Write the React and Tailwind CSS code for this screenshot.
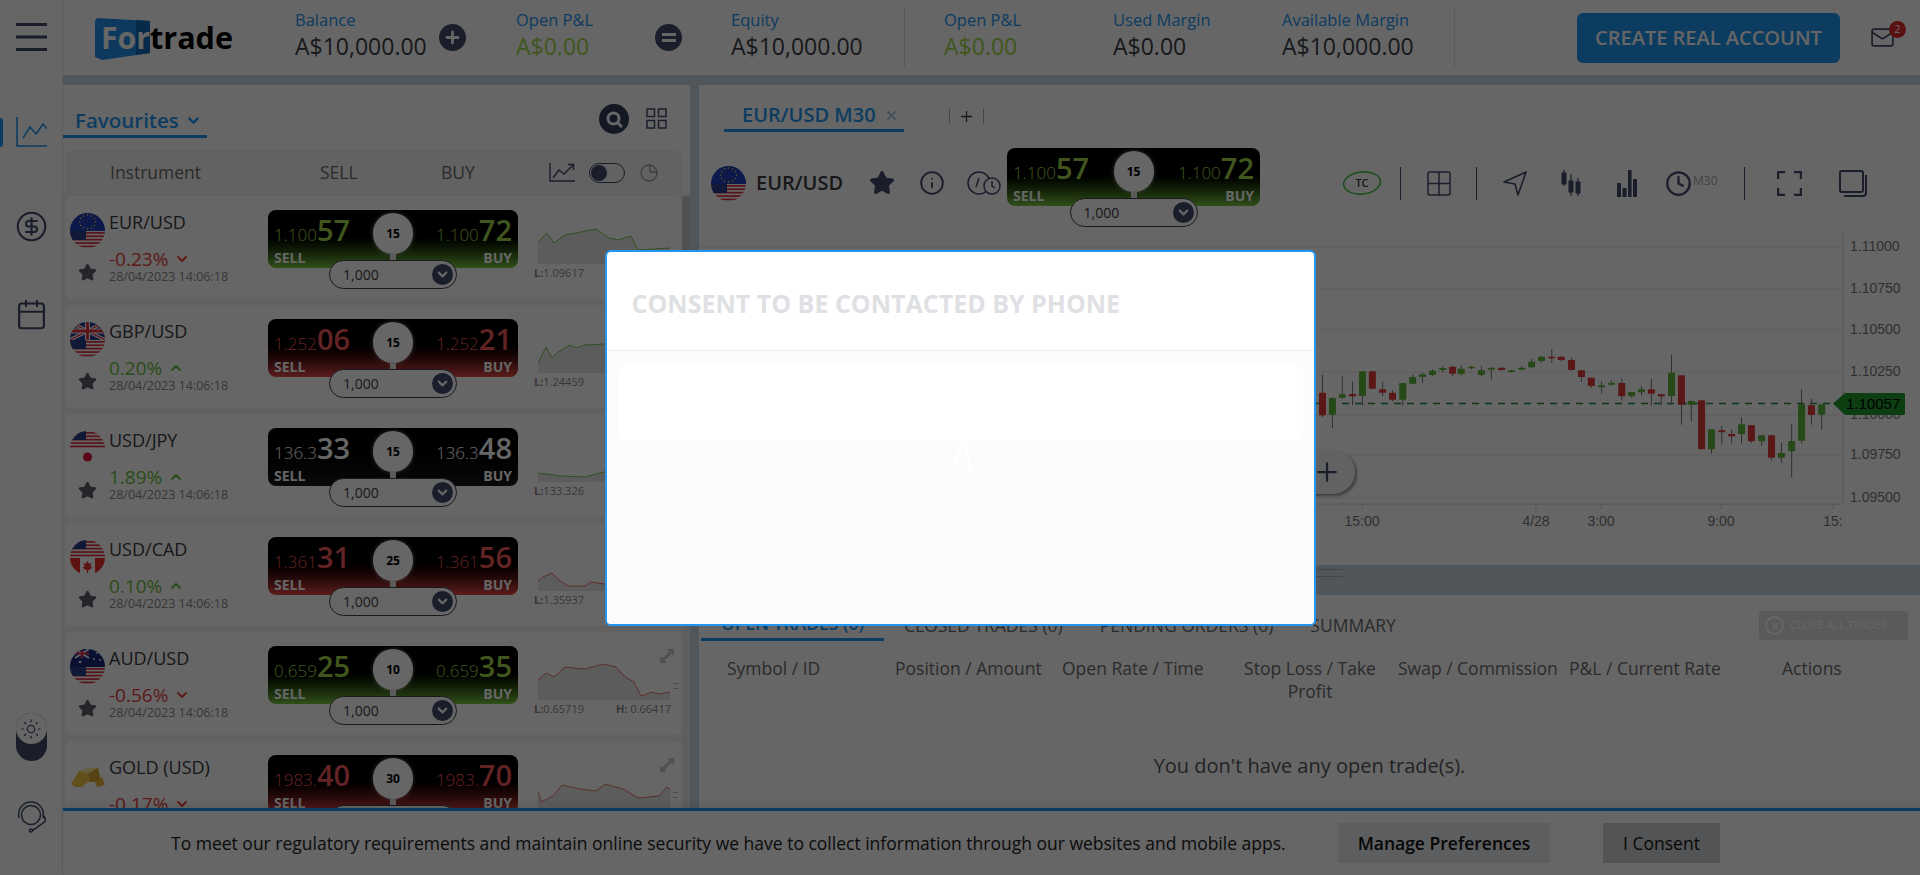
import React from 'react';
import { ChevronDown, ChevronUp, CircleDollarSign, Calendar, Info, Star, Clock, X, Plus, Sun, Mail } from 'lucide-react';

const STATS_DARK = 'text-[#3d4048]';

const ROWS = [
  { name: 'EUR/USD', top: 'eu', bottom: 'us', pct: '-0.23%', up: false, tone: 'green', sell: ['1.100', '57'], buy: ['1.100', '72'], spread: 15, low: '1.09617', spark: 'M0 14 L9 5 L16 15 L27 7 L38 5 L58 1 L71 10 L80 12 L93 8 L100 22 L132 20', stroke: 'green' },
  { name: 'GBP/USD', top: 'gb', bottom: 'us', pct: '0.20%', up: true, tone: 'red', sell: ['1.252', '06'], buy: ['1.252', '21'], spread: 15, low: '1.24459', spark: 'M0 26 L8 10 L14 21 L20 15 L32 8 L38 11 L47 8 L66 7 L132 8', stroke: 'green' },
  { name: 'USD/JPY', top: 'us', bottom: 'jp', pct: '1.89%', up: true, tone: 'none', sell: ['136.3', '33'], buy: ['136.3', '48'], spread: 15, low: '133.326', spark: 'M0 27 L23 30 L47 31 L66 26 L132 24', stroke: 'green' },
  { name: 'USD/CAD', top: 'us', bottom: 'ca', pct: '0.10%', up: true, tone: 'red', sell: ['1.361', '31'], buy: ['1.361', '56'], spread: 25, low: '1.35937', spark: 'M0 26 L5 22 L14 18 L22 26 L30 31 L47 31 L53 27 L66 29 L132 30', stroke: 'red' },
  { name: 'AUD/USD', top: 'au', bottom: 'us', pct: '-0.56%', up: false, tone: 'green', sell: ['0.659', '25'], buy: ['0.659', '35'], spread: 10, low: '0.65719', high: '0.66417', expand: true, spark: 'M0 16 L8 9 L16 13 L27 3 L36 4 L47 5 L65 0 L78 3 L87 13 L96 18 L103 32 L114 28 L121 30 L132 28', stroke: 'red' },
  { name: 'GOLD (USD)', gold: true, pct: '-0.17%', up: false, tone: 'red', sell: ['1983.', '40'], buy: ['1983.', '70'], spread: 30, expand: true, spark: 'M0 19 L3 29 L15 23 L24 12 L42 16 L58 18 L67 11 L85 16 L100 25 L121 23 L129 14 L132 16', stroke: 'red' },
];

const CANDLES = [
  [57, 398, 525, 452, 520, 'r'], [82, 465, 558, 468, 518, 'g'], [107, 402, 470, 457, 467, 'g'], [133, 418, 490, 456, 463, 'r'],
  [158, 388, 490, 388, 462, 'g'], [183, 388, 440, 388, 440, 'r'], [209, 420, 462, 442, 452, 'r'], [234, 445, 478, 452, 473, 'r'],
  [260, 423, 490, 423, 473, 'g'], [285, 397, 427, 405, 425, 'g'], [310, 392, 423, 397, 405, 'g'], [335, 382, 402, 386, 399, 'g'],
  [361, 373, 392, 378, 384, 'g'], [386, 372, 403, 374, 395, 'r'], [408, 370, 400, 380, 396, 'g'], [434, 372, 382, 374, 379, 'g'],
  [459, 372, 403, 385, 399, 'g'], [484, 376, 412, 377, 383, 'g'], [510, 376, 386, 377, 384, 'r'], [535, 383, 392, 385, 390, 'g'],
  [561, 372, 385, 377, 383, 'g'], [586, 350, 378, 359, 376, 'g'], [611, 342, 362, 344, 357, 'g'], [637, 322, 362, 344, 349, 'r'],
  [661, 342, 358, 344, 354, 'r'], [687, 347, 388, 354, 384, 'r'], [712, 385, 420, 385, 405, 'r'], [737, 407, 438, 407, 432, 'r'],
  [763, 418, 455, 430, 436, 'g'], [788, 415, 431, 422, 428, 'g'], [814, 410, 475, 423, 463, 'r'], [839, 450, 468, 450, 463, 'g'],
  [864, 432, 460, 442, 451, 'g'], [889, 410, 490, 442, 455, 'r'], [914, 455, 490, 457, 463, 'r'], [940, 338, 488, 392, 462, 'g'],
  [965, 400, 548, 400, 488, 'r'], [990, 475, 538, 477, 488, 'g'], [1016, 475, 622, 475, 622, 'r'], [1041, 562, 635, 562, 622, 'g'],
  [1067, 552, 608, 565, 571, 'r'], [1092, 562, 604, 576, 583, 'r'], [1117, 525, 604, 547, 576, 'g'], [1142, 550, 603, 550, 598, 'r'],
  [1168, 580, 612, 580, 598, 'g'], [1193, 580, 656, 580, 647, 'r'], [1218, 602, 662, 633, 647, 'g'], [1244, 545, 706, 597, 628, 'g'],
  [1269, 443, 604, 487, 596, 'g'], [1294, 470, 548, 490, 519, 'r'], [1320, 487, 563, 487, 518, 'g'],
];

const PRICE_LEVELS = [['1.11000', 13], ['1.10750', 55], ['1.10500', 96], ['1.10250', 138], ['1.10000', 181], ['1.09750', 221], ['1.09500', 264]];
const TIME_TICKS = [['15:00', 663], ['4/28', 837], ['3:00', 902], ['9:00', 1022], ['15:', 1134]];

function FlagHalf({ code, y, h }) {
  if (code === 'eu') {
    return (
      <g>
        <rect x="0" y={y} width="35" height={h} fill="#1e3fb8" />
        {[0, 1, 2, 3, 4, 5, 6, 7, 8, 9, 10, 11].map((i) => (
          <circle key={i} cx={17.5 + 8 * Math.cos((i * Math.PI) / 6)} cy={y + 9 + 7 * Math.sin((i * Math.PI) / 6)} r="0.8" fill="#f8d838" />
        ))}
      </g>
    );
  }
  if (code === 'us') {
    return (
      <g>
        <rect x="0" y={y} width="35" height={h} fill="#fff" />
        {[0, 1, 2, 3, 4].map((i) => (
          <rect key={i} x="0" y={y + 1 + i * 3.4} width="35" height="1.7" fill="#d8303c" />
        ))}
        <rect x="0" y={y} width="16" height="9" fill="#2b3f8c" />
      </g>
    );
  }
  if (code === 'gb') {
    return (
      <g>
        <rect x="0" y={y} width="35" height={h} fill="#27409a" />
        <path d={`M0 ${y} L35 ${y + h} M35 ${y} L0 ${y + h}`} stroke="#fff" strokeWidth="3.5" />
        <path d={`M0 ${y} L35 ${y + h} M35 ${y} L0 ${y + h}`} stroke="#e0303c" strokeWidth="1.3" />
        <path d={`M17.5 ${y} V${y + h} M0 ${y + h / 2} H35`} stroke="#fff" strokeWidth="5" />
        <path d={`M17.5 ${y} V${y + h} M0 ${y + h / 2} H35`} stroke="#e0303c" strokeWidth="2.8" />
      </g>
    );
  }
  if (code === 'jp') {
    return (
      <g>
        <rect x="0" y={y} width="35" height={h} fill="#fff" />
        <circle cx="17.5" cy={y + 8} r="4.5" fill="#e0103c" />
      </g>
    );
  }
  if (code === 'ca') {
    return (
      <g>
        <rect x="0" y={y} width="35" height={h} fill="#fff" />
        <rect x="0" y={y} width="10" height={h} fill="#ee3028" />
        <rect x="25" y={y} width="10" height={h} fill="#ee3028" />
        <path d={`M17.5 ${y + 3} l2 3 2-1 -1 4 2 0 -3 3 h-1.4 v3 h-1.2 v-3 h-1.4 l-3-3 2 0 -1-4 2 1z`} fill="#ee3028" />
      </g>
    );
  }
  return (
    <g>
      <rect x="0" y={y} width="35" height={h} fill="#1a2a78" />
      <rect x="5" y={y} width="14" height="9" fill="#27409a" />
      <path d={`M5 ${y} L19 ${y + 9} M19 ${y} L5 ${y + 9}`} stroke="#fff" strokeWidth="1.5" />
      <path d={`M12 ${y} V${y + 9} M5 ${y + 4.5} H19`} stroke="#e0303c" strokeWidth="2" />
      <circle cx="10" cy={y + 13} r="1.3" fill="#fff" />
      <circle cx="27" cy={y + 4} r="0.9" fill="#fff" />
      <circle cx="24" cy={y + 10} r="0.9" fill="#fff" />
      <circle cx="30" cy={y + 11} r="0.9" fill="#fff" />
    </g>
  );
}

function PairFlag({ top, bottom }) {
  const clip = 'clip' + top + bottom;
  return (
    <svg width="35" height="35" viewBox="0 0 35 35" className="block shrink-0">
      <defs>
        <clipPath id={clip}>
          <circle cx="17.5" cy="17.5" r="17.5" />
        </clipPath>
      </defs>
      <g clipPath={`url(#${clip})`}>
        <FlagHalf code={top} y={0} h={18} />
        <FlagHalf code={bottom} y={18} h={17} />
      </g>
    </svg>
  );
}

function GoldBars() {
  return (
    <svg width="35" height="35" viewBox="0 0 35 35" className="block shrink-0">
      <path d="M1 26 L9 13 L20 10 L28 10 L31 24 L18 24 L12 29 L5 29z" fill="#f2c84a" />
      <path d="M9 13 L20 10 L28 10 L18 16z" fill="#ffe99a" />
      <path d="M18 16 L28 10 L31 24 L20 24z" fill="#dca838" />
      <path d="M25 24 L32 19 L35 27 L27 29z" fill="#e8b63a" />
    </svg>
  );
}

function PriceBox({ sell, buy, spread, tone, wide }) {
  const bg = tone === 'green'
    ? 'from-black from-40% to-[#78c840]'
    : tone === 'red'
      ? 'from-black from-40% to-[#e84848]'
      : 'from-black to-[#1a1a20]';
  const price = tone === 'green' ? 'text-[#a0d84a]' : tone === 'red' ? 'text-[#f25858]' : 'text-white';
  return (
    <div className={wide ? 'flex w-[253px] flex-col items-center' : 'flex w-[250px] flex-col items-center'}>
      <div className={`relative flex h-[58px] w-full justify-between rounded-lg bg-linear-to-b px-[6px] pt-[4px] ${bg}`}>
        <div className="flex flex-col">
          <div className={`flex items-baseline leading-[32px] ${price}`}>
            <span className="text-[17px] font-light">{sell[0]}</span>
            <span className="text-[29px] font-semibold">{sell[1]}</span>
          </div>
          <span className="-mt-[2px] text-[14px] leading-[18px] font-bold text-white">SELL</span>
        </div>
        <div className="flex flex-col items-end">
          <div className={`flex items-baseline leading-[32px] ${price}`}>
            <span className="text-[17px] font-light">{buy[0]}</span>
            <span className="text-[29px] font-semibold">{buy[1]}</span>
          </div>
          <span className="-mt-[2px] text-[14px] leading-[18px] font-bold text-white">BUY</span>
        </div>
        <div className="absolute top-[3px] left-1/2 flex h-[41px] w-[40px] -translate-x-1/2 items-center justify-center rounded-full bg-white text-[12px] font-bold text-black shadow-[0_0_4px_rgba(255,255,255,0.5)]">{spread}</div>
        <div className="absolute top-[43px] left-1/2 h-[8px] w-[6px] -translate-x-1/2 bg-[#e4e4e4]" />
      </div>
      <div className="relative -mt-[8px] flex h-[29px] w-[128px] items-center justify-between rounded-full border border-[#3d4048] bg-white pr-[3px] pl-[13px] text-[14px] text-[#3d4048]">
        <span>1,000</span>
        <div className="flex h-[21px] w-[21px] items-center justify-center rounded-full bg-[#414b6b]">
          <ChevronDown size={15} strokeWidth={3.5} className="text-white" />
        </div>
      </div>
    </div>
  );
}

function Spark({ path, stroke }) {
  const color = stroke === 'green' ? '#7cc64a' : '#e8726c';
  return (
    <svg width="132" height="36" viewBox="0 0 132 36" className="block">
      <path d={`${path} V36 H0 Z`} fill="#e6e6e6" />
      <path d={path} fill="none" stroke={color} strokeWidth="1" />
    </svg>
  );
}

function ExpandIcon() {
  return (
    <svg width="14" height="14" viewBox="0 0 14 14" className="absolute top-[17px] right-[8px]" fill="#c8c8c8">
      <path d="M7 0h7v7l-2.4-2.4L4.6 11.6 7 14H0V7l2.4 2.4 7-7z" />
    </svg>
  );
}

function InstrumentRow({ row }) {
  const pctColor = row.up ? 'text-[#6ebf3a]' : 'text-[#e8403c]';
  return (
    <div className="relative mb-[6px] flex h-[103px] shrink-0 rounded-md bg-white pl-[5px]">
      <div className="flex w-[198px] shrink-0">
        <div className="flex w-[39px] shrink-0 flex-col pt-[17px]">
          {row.gold ? <GoldBars /> : <PairFlag top={row.top} bottom={row.bottom} />}
          <Star size={19} className="mt-[15px] ml-[8px] fill-[#5a5f6b] text-[#5a5f6b]" />
        </div>
        <div className="flex flex-col pt-[14px]">
          <span className="text-[18px] leading-[24px] text-[#3a3c42]">{row.name}</span>
          <div className={`mt-[15px] flex items-center gap-[6px] text-[19px] leading-[20px] ${pctColor}`}>
            {row.pct}
            {row.up ? <ChevronUp size={16} strokeWidth={3} /> : <ChevronDown size={16} strokeWidth={3} />}
          </div>
          <span className="text-[12.5px] leading-[16px] whitespace-nowrap text-[#8a8a8a]">28/04/2023 14:06:18</span>
        </div>
      </div>
      <div className="pt-[14px]">
        <PriceBox sell={row.sell} buy={row.buy} spread={row.spread} tone={row.tone} />
      </div>
      <div className="ml-[20px] flex w-[135px] flex-col pt-[32px]">
        <Spark path={row.spark} stroke={row.stroke} />
        {row.low && (
          <div className="mt-[1px] flex justify-between pr-[2px] text-[11px] text-[#8a8a8a]">
            <span className="-ml-[4px]"><b>L:</b>{row.low}</span>
            {row.high && <span><b>H:</b> {row.high}</span>}
          </div>
        )}
      </div>
      {row.expand && <ExpandIcon />}
      {row.expand && <div className="absolute top-[51px] right-[4px] h-[6px] w-[5px] border-y border-[#bbb]" />}
    </div>
  );
}

function Stat({ label, value, className, green }) {
  return (
    <div className={`flex shrink-0 flex-col pb-[8px] ${className}`}>
      <span className="text-[16.5px] leading-[24px] text-[#2196f3]">{label}</span>
      <span className={green ? 'text-[23px] leading-[28px] text-[#a0d84a]' : `text-[23px] leading-[28px] ${STATS_DARK}`}>{value}</span>
    </div>
  );
}

function Hamburger() {
  return (
    <svg width="31" height="28" viewBox="0 0 31 28" className="block">
      <path d="M0 1.5H31M0 14H31M0 26.5H31" stroke="#414b6b" strokeWidth="3" />
    </svg>
  );
}

function Sidebar() {
  return (
    <aside className="relative flex h-full w-[63px] shrink-0 flex-col items-center border-r border-[#e6e6e6] bg-white">
      <div className="mt-[23px]"><Hamburger /></div>
      <div className="absolute top-[118px] left-0 h-[29px] w-[3px] rounded-r bg-[#2196f3]" />
      <svg width="31" height="30" viewBox="0 0 31 30" className="mt-[66px] block" fill="none" stroke="#2196f3" strokeWidth="1.6">
        <path d="M1 0V29H31" />
        <path d="M7 21L14 10L20 17L27 7L31 12" />
      </svg>
      <CircleDollarSign size={33} strokeWidth={1.5} className="mt-[63px] text-[#414b6b]" />
      <Calendar size={33} strokeWidth={1.6} className="mt-[55px] text-[#414b6b]" />
      <div className="mt-auto mb-[114px] flex h-[48px] w-[31px] flex-col items-center rounded-full bg-[#414b6b]">
        <div className="flex h-[31px] w-[31px] items-center justify-center rounded-full bg-white">
          <Sun size={22} strokeWidth={1.3} className="text-[#414b6b]" />
        </div>
      </div>
      <svg width="31" height="32" viewBox="0 0 31 32" className="absolute top-[801px] left-[16px]" fill="none" stroke="#414b6b" strokeWidth="1.5">
        <circle cx="15" cy="14" r="9.5" />
        <path d="M3 17C1 8 7 1 15 1S29 8 27 17" />
        <path d="M27 15C30 16 30 21 27 22C24 24 21 27 17 29" />
        <circle cx="15" cy="29.5" r="1.6" />
      </svg>
    </aside>
  );
}

function TopBar() {
  return (
    <header className="flex h-[75px] shrink-0 items-center bg-white">
      <svg width="140" height="44" viewBox="0 0 140 44" className="mt-[2px] ml-[31px] block shrink-0">
        <path d="M1 4L3 1L56 4V36L8 43L1 40Z" fill="#1f8fe8" />
        <path d="M56 4V36L42 38V3Z" fill="#0f6ab8" />
        <text x="7" y="32" fontFamily="Open Sans" fontWeight="700" fontSize="30" textLength="49" lengthAdjust="spacingAndGlyphs" fill="#fff">For</text>
        <text x="56" y="32" fontFamily="Open Sans" fontWeight="700" fontSize="30" textLength="83" lengthAdjust="spacingAndGlyphs" fill="#000">trade</text>
      </svg>
      <Stat label="Balance" value="A$10,000.00" className="ml-[61px] w-[144px]" />
      <div className="flex h-[27px] w-[27px] shrink-0 items-center justify-center rounded-full bg-[#414b6b] text-white"><Plus size={19} strokeWidth={3.5} /></div>
      <Stat label="Open P&L" value="A$0.00" green className="ml-[50px] w-[139px]" />
      <div className="flex h-[27px] w-[27px] shrink-0 flex-col items-center justify-center gap-[3px] rounded-full bg-[#414b6b]">
        <div className="h-[3px] w-[14px] bg-white" />
        <div className="h-[3px] w-[14px] bg-white" />
      </div>
      <Stat label="Equity" value="A$10,000.00" className="ml-[49px] w-[174px] border-r border-[#e0e0e0]" />
      <Stat label="Open P&L" value="A$0.00" green className="ml-[39px] w-[169px]" />
      <Stat label="Used Margin" value="A$0.00" className="w-[169px]" />
      <Stat label="Available Margin" value="A$10,000.00" className="w-[173px] border-r border-[#e0e0e0]" />
      <button className="ml-[122px] flex h-[50px] w-[263px] shrink-0 items-center justify-center rounded-md bg-[#2196f3] text-[20px] font-semibold text-white">CREATE REAL ACCOUNT</button>
      <div className="relative ml-[30px]">
        <Mail size={25} strokeWidth={1.6} className="text-[#414b6b]" />
        <span className="absolute -top-[4px] -right-[11px] flex h-[17px] w-[17px] items-center justify-center rounded-full bg-[#e02a2a] text-[11px] text-white">2</span>
      </div>
    </header>
  );
}

function LeftPanel() {
  return (
    <section className="flex h-full w-[627px] shrink-0 flex-col bg-white">
      <div className="flex h-[53px] shrink-0">
        <div className="flex h-[53px] w-[144px] items-end gap-[6px] border-b-[3px] border-[#2196f3] pb-[1px] pl-[12px] whitespace-nowrap">
          <span className="text-[20.5px] leading-[28px] font-semibold text-[#2196f3]">Favourites</span>
          <ChevronDown size={17} strokeWidth={3} className="mb-[5px] shrink-0 text-[#2196f3]" />
        </div>
        <div className="ml-auto flex items-start pt-[19px] pr-[23px]">
          <div className="flex h-[30px] w-[30px] items-center justify-center rounded-full bg-[#333c58]">
            <svg width="17" height="17" viewBox="0 0 17 17" fill="none" stroke="#fff" strokeWidth="3">
              <circle cx="7.5" cy="7.5" r="5.5" />
              <path d="M11.5 11.5L16 16" />
            </svg>
          </div>
          <svg width="21" height="21" viewBox="0 0 21 21" className="mt-[4px] ml-[17px]" fill="none" stroke="#414b6b" strokeWidth="1.5">
            <rect x="1" y="1" width="7.5" height="7.5" />
            <rect x="12.5" y="1" width="7.5" height="7.5" />
            <rect x="1" y="12.5" width="7.5" height="7.5" />
            <rect x="12.5" y="12.5" width="7.5" height="7.5" />
          </svg>
        </div>
      </div>
      <div className="mt-[12px] ml-[2px] flex h-[43px] w-[617px] shrink-0 items-center rounded-t-md bg-[#f4f4f4] pt-[2px] text-[17.5px] text-[#6c6c6c]">
        <span className="ml-[45px] w-[210px] shrink-0">Instrument</span>
        <span className="w-[121px] shrink-0">SELL</span>
        <span className="w-[108px] shrink-0">BUY</span>
        <svg width="26" height="20" viewBox="0 0 26 20" className="shrink-0" fill="none" stroke="#414b6b" strokeWidth="1.4">
          <path d="M1 0V18H26" />
          <path d="M4 15L10 7L15 11L24 2M19 1.5H24.5V7" />
        </svg>
        <div className="ml-[14px] flex h-[20px] w-[36px] shrink-0 items-center rounded-full border border-[#414b6b] pl-[1px]">
          <div className="h-[16px] w-[16px] rounded-full bg-[#414b6b]" />
        </div>
        <svg width="19" height="19" viewBox="0 0 19 19" className="ml-[15px] shrink-0" fill="none" stroke="#9a9a9a" strokeWidth="1.3">
          <circle cx="9" cy="10" r="8" />
          <path d="M10 1V9H18" />
        </svg>
      </div>
      <div className="flex min-h-0 flex-1 bg-[#f2f2f2] pt-[3px]">
        <div className="ml-[2px] flex w-[617px] shrink-0 flex-col overflow-hidden">
          {ROWS.map((row) => <InstrumentRow key={row.name} row={row} />)}
        </div>
        <div className="w-[8px] bg-[#ececec]">
          <div className="h-[260px] w-full rounded bg-[#c8c8c8]" />
        </div>
      </div>
    </section>
  );
}

function ChartIconBars() {
  return (
    <svg width="20" height="27" viewBox="0 0 20 27" fill="#414b6b" className="block">
      <rect x="0" y="13" width="4" height="14" />
      <rect x="5.5" y="18" width="4" height="9" />
      <rect x="11" y="0" width="3.6" height="27" />
      <rect x="16" y="9" width="4" height="18" />
    </svg>
  );
}

function ChartIconCandles() {
  return (
    <svg width="20" height="27" viewBox="0 0 20 27" fill="#414b6b" stroke="#414b6b" className="block">
      <path d="M3 0V16M10 4V26M17 8V26" strokeWidth="1.2" />
      <rect x="1" y="3" width="4" height="11" />
      <rect x="8" y="11" width="4" height="11" />
      <rect x="15" y="12" width="4" height="11" />
    </svg>
  );
}

function ChartToolbar() {
  return (
    <div className="mt-[14px] flex h-[74px] items-center pl-[12px]">
      <PairFlag top="eu" bottom="us" />
      <span className="ml-[10px] w-[113px] shrink-0 text-[20px] font-semibold text-[#3a3c42]">EUR/USD</span>
      <Star size={26} className="fill-[#414b6b] text-[#414b6b]" />
      <Info size={26} strokeWidth={1.7} className="ml-[24px] text-[#414b6b]" />
      <svg width="34" height="26" viewBox="0 0 34 26" className="ml-[22px] shrink-0" fill="none" stroke="#414b6b" strokeWidth="1.5">
        <circle cx="12" cy="13" r="11" />
        <path d="M12 8L9 17M14 6.5V6.6" />
        <circle cx="25" cy="16" r="8" fill="#fff" />
        <path d="M25 11V16L28 18" />
      </svg>
      <div className="ml-[6px] self-start pt-[2px]">
        <PriceBox wide sell={['1.100', '57']} buy={['1.100', '72']} spread={15} tone="green" />
      </div>
      <svg width="40" height="24" viewBox="0 0 40 24" className="ml-[82px] shrink-0" fill="none">
        <ellipse cx="20" cy="12" rx="18.5" ry="11" stroke="#4cc04c" strokeWidth="1.6" transform="rotate(-6 20 12)" />
        <text x="20" y="16" textAnchor="middle" fontFamily="Open Sans" fontSize="11" fontWeight="600" fill="#3a3c42">TC</text>
      </svg>
      <div className="ml-[18px] h-[33px] w-[1px] bg-[#414b6b]" />
      <svg width="24" height="25" viewBox="0 0 24 25" className="ml-[26px] shrink-0" fill="none" stroke="#414b6b" strokeWidth="1.5">
        <rect x="1" y="1" width="22" height="23" rx="2" />
        <path d="M12 1V24M1 12.5H23" />
      </svg>
      <div className="ml-[25px] h-[33px] w-[1px] bg-[#414b6b]" />
      <svg width="25" height="25" viewBox="0 0 25 25" className="ml-[26px] shrink-0" fill="none" stroke="#414b6b" strokeWidth="1.6" strokeLinejoin="round">
        <path d="M23 1L1 11L12 13L15 24Z" />
      </svg>
      <div className="ml-[33px]"><ChartIconCandles /></div>
      <div className="ml-[36px]"><ChartIconBars /></div>
      <Clock size={27} strokeWidth={2} className="ml-[28px] text-[#414b6b]" />
      <span className="mb-[4px] ml-[1px] w-[26px] text-[12px] text-[#aaa]">M30</span>
      <div className="ml-[25px] h-[33px] w-[1px] bg-[#414b6b]" />
      <svg width="25" height="25" viewBox="0 0 25 25" className="ml-[32px] shrink-0" fill="none" stroke="#414b6b" strokeWidth="2.4">
        <path d="M1 8V1H8M17 1H24V8M24 17V24H17M8 24H1V17" />
      </svg>
      <svg width="28" height="27" viewBox="0 0 28 27" className="ml-[37px] shrink-0" fill="none" stroke="#414b6b" strokeWidth="2">
        <rect x="1" y="1" width="23" height="21" rx="2" />
        <path d="M27 5V23C27 25 26 26 24 26H5" />
      </svg>
    </div>
  );
}

function Chart() {
  return (
    <div className="relative h-[331px] shrink-0 bg-white">
      <svg width="1221" height="331" viewBox="0 0 1221 331" className="block" fontFamily="Liberation Sans" fontSize="14" fill="#777">
        {PRICE_LEVELS.map(([label, y]) => (
          <g key={label}>
            <line x1="0" x2="1144" y1={y} y2={y} stroke="#d8d8d8" strokeDasharray="1 1" />
            <text x="1151" y={y + 4}>{label}</text>
          </g>
        ))}
        <line x1="1144" x2="1144" y1="-4" y2="270" stroke="#aaa" strokeDasharray="1 1" />
        <line x1="0" x2="1144" y1="270" y2="270" stroke="#aaa" strokeDasharray="1 1" />
        {TIME_TICKS.map(([label, x]) => (
          <g key={label}>
            <line x1={x} x2={x} y1="270" y2="276" stroke="#aaa" strokeDasharray="1 1" />
            <text x={x} y="292" textAnchor="middle">{label}</text>
          </g>
        ))}
        <line x1="617" x2="1134" y1="169.5" y2="169.5" stroke="#1f8a3c" strokeWidth="1.5" strokeDasharray="7 6" />
        {CANDLES.map(([x, hi, lo, top, bottom, c]) => {
          const cx = 601 + x / 2.53;
          const fill = c === 'g' ? '#5eb63a' : '#e03a3a';
          return (
            <g key={x}>
              <line x1={cx} x2={cx} y1={8 + hi / 3} y2={8 + lo / 3} stroke="#777" />
              <rect x={cx - 3.5} y={8 + top / 3} width="7" height={(bottom - top) / 3} fill={fill} rx="0.5" />
            </g>
          );
        })}
        <path d="M1134 169.5L1146 159H1205Q1206 159 1206 161V179Q1206 181 1205 181H1146Z" fill="#1f9c2f" />
        <text x="1147" y="175" fill="#000" fontSize="15">1.10057</text>
      </svg>
      <div className="absolute top-[216px] left-[557px] flex h-[44px] w-[99px] items-center justify-end rounded-full bg-[#f4f4f8] pr-[13px] shadow-[2px_2px_3px_rgba(0,0,0,0.4)]">
        <Plus size={30} strokeWidth={1.8} className="text-[#414b6b]" />
      </div>
    </div>
  );
}

function BottomPanel() {
  return (
    <div className="flex min-h-0 flex-1 flex-col bg-white">
      <div className="flex h-[46px] shrink-0 items-end pl-[2px] text-[17.5px] text-[#6c6c6c]">
        <div className="flex h-[46px] w-[183px] items-end justify-center border-b-[3px] border-[#2196f3] pb-[2px] font-semibold whitespace-nowrap text-[#2196f3]">OPEN TRADES (0)</div>
        <span className="mb-[3px] ml-[20px]">CLOSED TRADES (0)</span>
        <span className="mb-[3px] ml-[37px]">PENDING ORDERS (0)</span>
        <span className="mb-[3px] ml-[37px]">SUMMARY</span>
        <div className="mr-[12px] mb-[1px] ml-auto flex h-[29px] w-[149px] items-center rounded bg-[#dfe1e6] pl-[6px] text-[11px] text-white">
          <span className="flex h-[19px] w-[19px] items-center justify-center rounded-full border-2 border-white"><X size={10} strokeWidth={3} /></span>
          <span className="ml-[6px] whitespace-nowrap">CLOSE ALL TRADES</span>
        </div>
      </div>
      <div className="mt-[16px] grid grid-cols-[168px_167px_182px_154px_171px_213px_auto] pl-[28px] text-[17.5px] leading-[23px] whitespace-nowrap text-[#6c6c6c]">
        <span>Symbol / ID</span>
        <span>Position / Amount</span>
        <span>Open Rate / Time</span>
        <span className="w-[132px] text-center whitespace-normal">Stop Loss / Take Profit</span>
        <span>Swap / Commission</span>
        <span>P&amp;L / Current Rate</span>
        <span>Actions</span>
      </div>
      <div className="mt-[48px] text-center text-[20px] text-[#55575c]">You don't have any open trade(s).</div>
    </div>
  );
}

function RightPanel() {
  return (
    <section className="flex h-full min-w-0 flex-1 flex-col bg-white">
      <div className="flex h-[47px] shrink-0">
        <div className="ml-[25px] flex h-[47px] w-[180px] items-end border-b-[3px] border-[#2196f3] pl-[18px]">
          <span className="text-[20px] leading-[28px] font-semibold whitespace-nowrap text-[#2196f3]">EUR/USD M30</span>
          <X size={15} className="mb-[6px] ml-[8px] shrink-0 text-[#8fb9e0]" />
        </div>
        <div className="mt-[24px] ml-[45px] flex h-[15px] w-[35px] items-center justify-center border-x border-[#aaa]">
          <Plus size={17} strokeWidth={1.8} className="text-[#3a3c42]" />
        </div>
      </div>
      <ChartToolbar />
      <div className="mt-[14px]"><Chart /></div>
      <div className="flex h-[30px] shrink-0 justify-center bg-[#c8d7e0] pt-[4px] pl-[26px]">
        <div className="h-[8px] w-[40px] border-y border-[#aab]" />
      </div>
      <BottomPanel />
    </section>
  );
}

function CookieBar() {
  return (
    <div className="absolute right-0 bottom-0 left-[63px] flex h-[67px] items-center border-t-[3px] border-[#2196f3] bg-white pl-[108px] shadow-[0_-4px_8px_rgba(0,0,0,0.08)]">
      <p className="w-[1167px] shrink-0 text-[17.5px] whitespace-nowrap text-[#222]">To meet our regulatory requirements and maintain online security we have to collect information through our websites and mobile apps.</p>
      <button className="flex h-[40px] w-[212px] shrink-0 items-center justify-center bg-[#e9ebf0] text-[17.5px] font-semibold text-[#111]">Manage Preferences</button>
      <button className="ml-[53px] flex h-[40px] w-[117px] shrink-0 items-center justify-center bg-[#cfd1d4] text-[17.5px] text-[#111]">I Consent</button>
    </div>
  );
}

function ConsentModal() {
  return (
    <div className="absolute inset-0 flex items-start justify-center bg-black/60 pt-[250px]">
      <div className="relative flex h-[376px] w-[711px] flex-col overflow-hidden rounded-md border-[2px] border-[#2196f3] bg-white">
        <div className="flex h-[99px] shrink-0 items-center border-b border-[#f0f0f2] pt-[5px] pl-[25px]">
          <h2 className="text-[25px] font-bold text-[#dfe0e3]">CONSENT TO BE CONTACTED BY PHONE</h2>
        </div>
        <div className="relative flex-1 bg-[#fcfcfd] px-[11px] pt-[14px]">
          <div className="h-[75px] rounded-lg bg-white" />
          <svg width="40" height="32" viewBox="0 0 40 32" className="mx-auto block" fill="none" stroke="#fff" strokeWidth="3" strokeLinecap="round">
            <path d="M2 2L9 6M23 2L14 24M26 4L30 30" />
          </svg>
        </div>
      </div>
    </div>
  );
}

export default function App() {
  return (
    <div className="relative flex h-[875px] w-full overflow-hidden bg-white font-['Open_Sans',sans-serif]">
      <Sidebar />
      <main className="flex h-full min-w-0 flex-1 flex-col">
        <TopBar />
        <div className="h-[10px] shrink-0 bg-[#c8d7e0]" />
        <div className="flex min-h-0 flex-1">
          <LeftPanel />
          <div className="w-[9px] shrink-0 bg-[#c8d7e0]" />
          <RightPanel />
        </div>
      </main>
      <CookieBar />
      <ConsentModal />
    </div>
  );
}
